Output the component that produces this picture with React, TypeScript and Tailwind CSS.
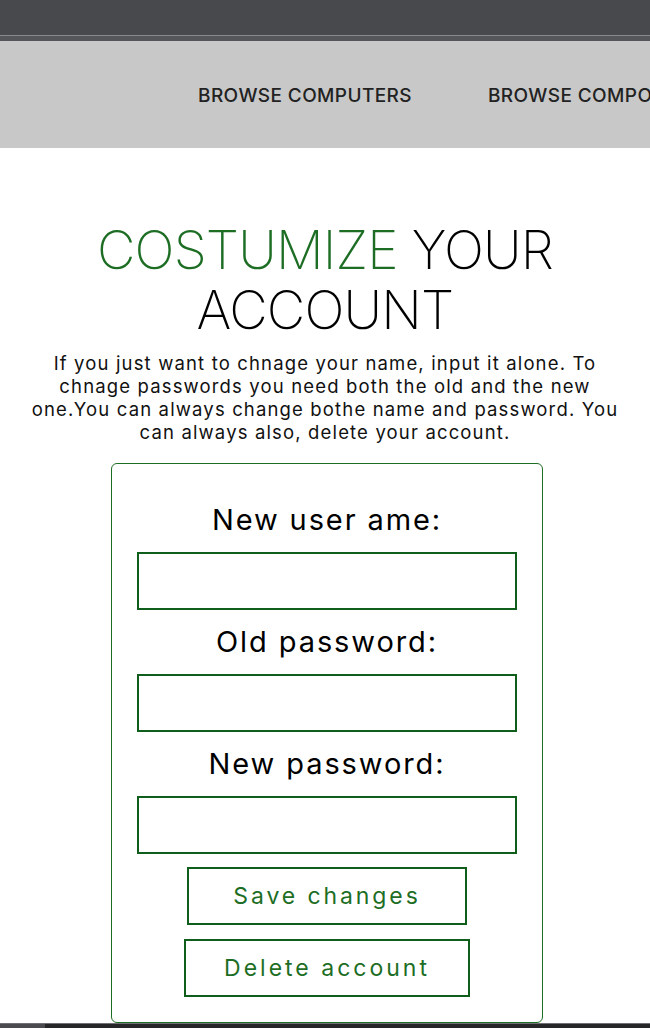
import React from 'react';

const fieldLabels = ['New user ame:', 'Old password:', 'New password:'];

const Field: React.FC<{ label: string }> = ({ label }) => (
  <>
    <label className="h-[36px] leading-[36px] text-[29px] tracking-[1.9px] text-black">{label}</label>
    <input
      type="text"
      className="w-[380px] h-[58px] border-2 border-[#0f5e1c] bg-white outline-none"
    />
  </>
);

export default function App() {
  return (
    <div className="w-[650px] min-h-[1028px] bg-white font-['Inter',sans-serif] overflow-hidden">
      {/* browser chrome */}
      <div className="h-[35px] bg-[#48494d]" />
      <div className="h-px bg-[#8a8a8e]" />
      <div className="h-[5px] bg-[#55565a]" />

      <nav className="h-[107px] pt-[3px] bg-[#c8c8c8] flex items-center pl-[198px] gap-[76px] whitespace-nowrap overflow-hidden">
        <a className="shrink-0 text-[19px] font-medium text-[#222] tracking-[0.4px]">BROWSE COMPUTERS</a>
        <a className="shrink-0 text-[19px] font-medium text-[#222] tracking-[0.4px]">BROWSE COMPONENTS</a>
      </nav>

      <main className="flex flex-col items-center">
        <h1 className="mt-[72px] text-center text-[53px] leading-[60px] font-extralight tracking-[-0.8px] text-black">
          <span className="text-[#1d6e24]">COSTUMIZE</span> YOUR
          <br />
          ACCOUNT
        </h1>

        <p className="mt-[12px] text-center text-[18.5px] leading-[23px] tracking-[1.15px] text-[#111]">
          If you just want to chnage your name, input it alone. To
          <br />
          chnage passwords you need both the old and the new
          <br />
          one.You can always change bothe name and password. You
          <br />
          can always also, delete your account.
        </p>

        <form className="mt-[19px] ml-[4px] w-[432px] border border-[#1d6e24] rounded-[6px] flex flex-col items-center gap-[14px] pt-[38px] pb-[25px]">
          {fieldLabels.map((l) => (
            <Field key={l} label={l} />
          ))}
          <button
            type="button"
            className="-mt-px w-[280px] h-[58px] border-2 border-[#0f5e1c] text-[23px] tracking-[2.9px] text-[#1d6e24]"
          >
            Save changes
          </button>
          <button
            type="button"
            className="w-[286px] h-[58px] border-2 border-[#0f5e1c] text-[23px] tracking-[3px] text-[#1d6e24]"
          >
            Delete account
          </button>
        </form>
      </main>

      <div className="h-px bg-[#707074]" />
      <div className="h-[5px] flex">
        <div className="w-[45px] bg-[#4b4b4f]" />
        <div className="flex-1 bg-[#262628]" />
      </div>
    </div>
  );
}
